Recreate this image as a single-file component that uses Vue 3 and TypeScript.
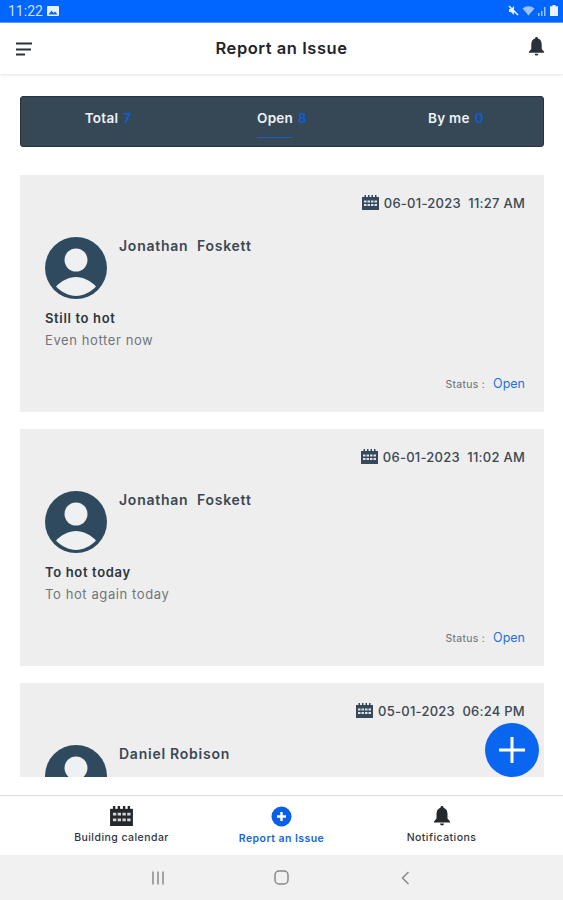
<script setup lang="ts">
interface Issue { date: string; time: string; name: string; title?: string; body?: string; status?: string }
const issues: Issue[] = [
  { date: '06-01-2023', time: '11:27 AM', name: 'Jonathan  Foskett', title: 'Still to hot', body: 'Even hotter now', status: 'Open' },
  { date: '06-01-2023', time: '11:02 AM', name: 'Jonathan  Foskett', title: 'To hot today', body: 'To hot again today', status: 'Open' },
  { date: '05-01-2023', time: '06:24 PM', name: 'Daniel Robison' },
]
const tabs = [
  { label: 'Total', n: '7', active: false },
  { label: 'Open', n: '8', active: true },
  { label: 'By me', n: '0', active: false },
]
</script>

<template>
  <div class="screen">
    <div class="statusbar">
      <div class="st-left">
        <span>11:22</span>
        <svg width="12" height="10" viewBox="0 0 12 10"><rect width="12" height="10" rx="1" fill="#e8f0ff"/><path d="M1.500 8.500 4.500 4.500l2 2.400L8 5.500l2.500 3z" fill="#0066ff"/></svg>
      </div>
      <div class="st-right">
        <svg width="11" height="11" viewBox="0 0 11 11"><path d="M1 4h2l3-3v9L3 7H1z" fill="#eaf2ff"/><path d="M1 1l9 9" stroke="#eaf2ff" stroke-width="1.600"/></svg>
        <svg width="13" height="11" viewBox="0 0 13 11"><path d="M0.500 3.500a9 9 0 0 1 12 0L6.500 10.500z" fill="#9cc2ff"/></svg>
        <svg width="9" height="10" viewBox="0 0 9 10"><path d="M0 10h1.500V7H0zM3 10h1.500V5H3zM6 10h1.500V1H6z" fill="#9cc2ff"/></svg>
        <svg width="8" height="11" viewBox="0 0 8 11"><path d="M2.500 0h3v1.200H8V11H0V1.200h2.500z" fill="#eaf2ff"/></svg>
      </div>
    </div>

    <header class="topbar">
      <svg class="menu" width="16" height="14" viewBox="0 0 16 14"><path d="M0 1.500h16M0 7.500h15M0 12.500h9" stroke="#2c3238" stroke-width="1.800"/></svg>
      <h1>Report an Issue</h1>
      <svg class="bell" width="17" height="19" viewBox="0 0 16 20"><path d="M8 0c1 0 1.500.7 1.500 1.700C12.300 2.500 13.500 5 13.500 8v4.500L16 15.500v1H0v-1l2.500-3V8C2.500 5 3.700 2.500 6.500 1.700 6.500.7 7 0 8 0zM6 17.500h4A2 2 0 0 1 6 17.500z" fill="#2b3138"/></svg>
    </header>

    <main class="content">
      <nav class="tabs">
        <div v-for="t in tabs" :key="t.label" class="tab">
          <span class="tab-label" :class="{ active: t.active }">{{ t.label }}</span>
          <b class="tab-num">{{ t.n }}</b>
        </div>
      </nav>

      <div class="list">
        <article v-for="(i, idx) in issues" :key="idx" class="card">
          <div class="date">
            <svg width="17" height="15" viewBox="0 0 17 15"><path d="M0 2h17v13H0z" fill="#34495a"/><path d="M2.500 0h1.500v3H2.500zM6 0h1.500v3H6zM9.500 0H11v3H9.500zM13 0h1.500v3H13z" fill="#34495a"/><path d="M2 5.500h2.500v2H2zM5.500 5.500H8v2H5.500zM9 5.500h2.500v2H9zM12.500 5.500H15v2h-2.500zM2 9h2.500v2H2zM5.500 9H8v2H5.500zM9 9h2.500v2H9zM12.500 9H15v2h-2.500z" fill="#dfe3e6"/></svg>
            <span class="date-text">{{ i.date }}&nbsp;&nbsp;{{ i.time }}</span>
          </div>
          <div class="person">
            <svg class="avatar" width="62" height="62" viewBox="0 0 62 62">
              <circle cx="31" cy="31" r="31" fill="#2f4a5e"/>
              <circle cx="31" cy="23" r="11.500" fill="#eef0f1"/>
              <path d="M11 49.500C16 44 24 40 31 40C38 40 46 44 51 49.500C46 55 38 59 31 59C24 59 16 55 11 49.500z" fill="#eef0f1"/>
            </svg>
            <span class="name">{{ i.name }}</span>
          </div>
          <template v-if="i.title">
            <div class="title">{{ i.title }}</div>
            <div class="body">{{ i.body }}</div>
            <div class="status"><span class="st-label">Status :</span><span class="st-val">{{ i.status }}</span></div>
          </template>
        </article>
      </div>

      <button class="fab" aria-label="Add">
        <svg width="28" height="28" viewBox="0 0 28 28"><path d="M14 1v26M1 14h26" stroke="#fff" stroke-width="3"/></svg>
      </button>
    </main>

    <footer class="bottomnav">
      <div class="nav-item">
        <svg width="23" height="20" viewBox="0 0 24 21"><path d="M0 3h24v18H0z" fill="#25282b"/><path d="M3 0h2.500v4H3zM8 0h2.500v4H8zM13.500 0H16v4h-2.500zM18.500 0H21v4h-2.500z" fill="#25282b"/><path d="M3 7h3.500v3H3zM8 7h3.500v3H8zM13 7h3.500v3H13zM18 7h3.500v3H18zM3 13h3.500v3H3zM8 13h3.500v3H8zM13 13h3.500v3H13zM18 13h3.500v3H18z" fill="#d4d4d4"/></svg>
        <span>Building calendar</span>
      </div>
      <div class="nav-item current">
        <svg width="21" height="21" viewBox="0 0 21 21"><circle cx="10.500" cy="10.500" r="10" fill="#0a5fe8"/><path d="M10.500 6v9M6 10.500h9" stroke="#fff" stroke-width="2.400"/></svg>
        <span>Report an Issue</span>
      </div>
      <div class="nav-item">
        <svg width="16" height="20" viewBox="0 0 16 20"><path d="M8 0c1 0 1.500.7 1.500 1.700C12.300 2.500 13.500 5 13.500 8v4.500L16 15.500v1H0v-1l2.500-3V8C2.500 5 3.700 2.500 6.500 1.700 6.500.7 7 0 8 0zM6 17.500h4A2 2 0 0 1 6 17.500z" fill="#25282b"/></svg>
        <span>Notifications</span>
      </div>
    </footer>

    <div class="sysnav">
      <svg width="14" height="14" viewBox="0 0 14 14"><path d="M2 0.500v13M7 0.500v13M12 0.500v13" stroke="#85898c" stroke-width="1.500"/></svg>
      <svg width="15" height="15" viewBox="0 0 15 15"><rect x="1" y="1" width="13" height="13" rx="4" fill="none" stroke="#85898c" stroke-width="1.500"/></svg>
      <svg width="9" height="14" viewBox="0 0 9 14"><path d="M7.500 1 1.500 7l6 6" fill="none" stroke="#85898c" stroke-width="1.500"/></svg>
    </div>
  </div>
</template>

<style>
html, body { margin: 0; background: #fff; }
</style>

<style scoped>
.screen {
  width: 563px;
  height: 900px;
  display: flex;
  flex-direction: column;
  overflow: hidden;
  font-family: "Inter", "Liberation Sans", sans-serif;
  color: #2f3d49;
  background: #fff;
}
.statusbar {
  height: 23px;
  flex: none;
  box-sizing: border-box;
  background: #0066ff;
  border-bottom: 1px solid #5c9bff;
  padding: 0 5px 1px 8px;
  display: flex;
  align-items: center;
  justify-content: space-between;
  color: #cfe0ff;
  font: 14px "Roboto", sans-serif;
}
.st-left { display: flex; align-items: center; gap: 4px; }
.st-right { display: flex; align-items: center; gap: 3px; }
.topbar {
  height: 51px;
  flex: none;
  box-sizing: border-box;
  padding: 0 18px 0 16px;
  display: flex;
  align-items: center;
  justify-content: space-between;
  background: #fff;
  box-shadow: 0 1px 3px rgba(0, 0, 0, .12);
  position: relative;
}
.topbar h1 {
  margin: 0;
  font-size: 16.500px;
  font-weight: 600;
  color: #1f2429;
  letter-spacing: .55px;
  position: absolute;
  left: 0;
  right: 0;
  top: 16px;
  line-height: 18px;
  text-align: center;
}
.bell { margin-top: -5px; }
.content {
  flex: none;
  height: 722px;
  box-sizing: border-box;
  padding: 22px 19px 0 20px;
  position: relative;
  display: flex;
  flex-direction: column;
}
.tabs {
  height: 51px;
  flex: none;
  box-sizing: border-box;
  background: #364855;
  border: 1px solid #26343f;
  border-radius: 3px;
  display: grid;
  grid-template-columns: 1fr 1fr 1fr;
}
.tab {
  display: flex;
  justify-content: center;
  align-items: flex-start;
  gap: 5px;
  padding-top: 13px;
  box-sizing: border-box;
  font-size: 13.500px;
  font-weight: 600;
  color: #eef2f5;
  letter-spacing: .25px;
}
.tab-label { height: 28px; box-sizing: border-box; }
.tab-label.active { border-bottom: 1px solid #1c5cc0; }
.tab-num { color: #0d5ed8; font-weight: 600; }
.list {
  margin-top: 28px;
  height: 602px;
  overflow: hidden;
  flex: none;
  display: flex;
  flex-direction: column;
  gap: 17px;
}
.card {
  height: 237px;
  flex: none;
  box-sizing: border-box;
  background: #eeeeee;
  padding: 19px 19px 0 25px;
  display: flex;
  flex-direction: column;
}
.date {
  display: flex;
  justify-content: flex-end;
  align-items: center;
  gap: 5px;
  height: 17px;
}
.date-text { font-size: 13px; font-weight: 500; color: #3a4854; letter-spacing: .25px; white-space: pre; }
.person {
  display: flex;
  align-items: flex-start;
  gap: 12px;
  margin-top: 26px;
}
.avatar { flex: none; }
.name { font-size: 14px; font-weight: 600; color: #3a4854; letter-spacing: .75px; white-space: pre; line-height: 18px; }
.title { margin-top: 10px; font-size: 13px; font-weight: 600; color: #2c3640; line-height: 18px; letter-spacing: .65px; }
.body { margin-top: 4px; font-size: 13px; color: #6e757c; line-height: 18px; letter-spacing: .6px; }
.status {
  margin-top: 26px;
  display: flex;
  justify-content: flex-end;
  align-items: baseline;
  gap: 8px;
  line-height: 18px;
}
.st-label { font-size: 10.500px; color: #666d73; letter-spacing: .3px; }
.st-val { font-size: 12.500px; color: #1a73e0; }
.fab {
  position: absolute;
  right: 24px;
  top: 649px;
  width: 54px;
  height: 54px;
  border: 0;
  border-radius: 50%;
  padding: 0;
  background: #0a66f0;
  display: flex;
  align-items: center;
  justify-content: center;
}
.bottomnav {
  flex: none;
  height: 60px;
  box-sizing: border-box;
  border-top: 1px solid #dcdcdc;
  display: grid;
  grid-template-columns: 160px 160px 160px;
  justify-content: center;
  padding-top: 10px;
  margin-top: -1px;
  background: #fff;
}
.nav-item {
  display: flex;
  flex-direction: column;
  align-items: center;
  gap: 5px;
  font-size: 10.500px;
  font-weight: 500;
  letter-spacing: .45px;
  color: #30363b;
}
.nav-item.current { color: #1766d2; font-weight: 600; }
.sysnav {
  flex: none;
  height: 45px;
  background: #f1f1f1;
  display: grid;
  grid-template-columns: 124px 124px 124px;
  justify-content: center;
  justify-items: center;
  align-items: center;
}
</style>
